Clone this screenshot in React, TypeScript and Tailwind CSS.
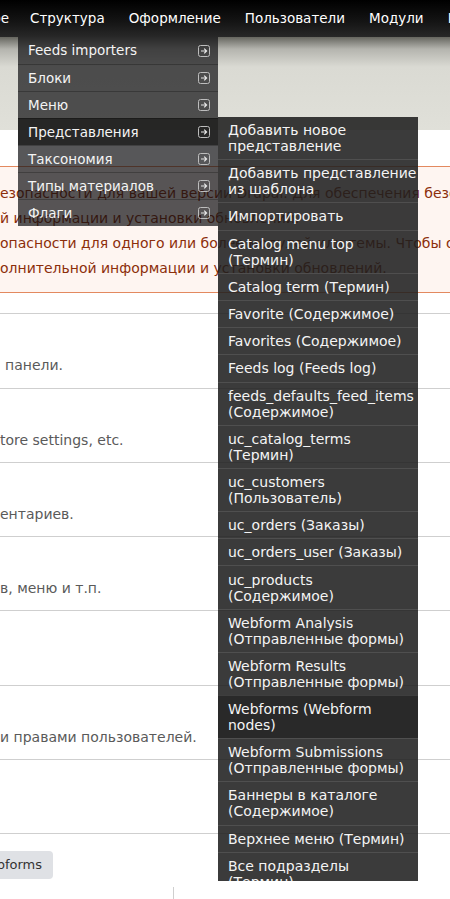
import React from 'react';

const topLinks = ['Структура', 'Оформление', 'Пользователи', 'Модули', 'Конфигурация'];

const structureMenu = [
  { label: 'Feeds importers' },
  { label: 'Блоки' },
  { label: 'Меню' },
  { label: 'Представления', active: true },
  { label: 'Таксономия' },
  { label: 'Типы материалов' },
  { label: 'Флаги' },
];

const viewsMenu = [
  { lines: ['Добавить новое', 'представление'] },
  { lines: ['Добавить представление', 'из шаблона'] },
  { lines: ['Импортировать'] },
  { lines: ['Catalog menu top', '(Термин)'] },
  { lines: ['Catalog term (Термин)'] },
  { lines: ['Favorite (Содержимое)'] },
  { lines: ['Favorites (Содержимое)'] },
  { lines: ['Feeds log (Feeds log)'] },
  { lines: ['feeds_defaults_feed_items', '(Содержимое)'] },
  { lines: ['uc_catalog_terms', '(Термин)'] },
  { lines: ['uc_customers', '(Пользователь)'] },
  { lines: ['uc_orders (Заказы)'] },
  { lines: ['uc_orders_user (Заказы)'] },
  { lines: ['uc_products', '(Содержимое)'] },
  { lines: ['Webform Analysis', '(Отправленные формы)'] },
  { lines: ['Webform Results', '(Отправленные формы)'] },
  { lines: ['Webforms (Webform', 'nodes)'], active: true },
  { lines: ['Webform Submissions', '(Отправленные формы)'] },
  { lines: ['Баннеры в каталоге', '(Содержимое)'] },
  { lines: ['Верхнее меню (Термин)'] },
  { lines: ['Все подразделы', '(Термин)'] },
];

const messageLines = [
  'езопасности для вашей версии Drupal. Для обеспечения безопасности вашего сервера',
  'й информации и установки обновлений.',
  'опасности для одного или более модулей или темы. Чтобы обеспечить безопасность',
  'олнительной информации и установки обновлений.',
];

const sections = [
  { h: 'h-[75px]', text: 'панели.', pad: 'pl-[5px]' },
  { h: 'h-[74px]', text: 'tore settings, etc.', pad: 'pl-0' },
  { h: 'h-[74px]', text: 'ентариев.', pad: 'pl-0' },
  { h: 'h-[74px]', text: 'в, меню и т.п.', pad: 'pl-0' },
  { h: 'h-[75px]', text: '', pad: 'pl-0' },
  { h: 'h-[74px]', text: 'и правами пользователей.', pad: 'pl-0' },
  { h: 'h-[74px]', text: '', pad: 'pl-0' },
];

const ExpandIcon = () => (
  <svg width="12" height="12" viewBox="0 0 12 12" fill="none">
    <rect x="0.5" y="0.5" width="11" height="11" rx="2" stroke="#bdbdbd" />
    <path d="M3 6h5.5M6.2 3.6 8.6 6 6.2 8.4" stroke="#e6e6e6" strokeWidth="1.2" />
  </svg>
);

const App = () => {
  return (
    <div className="relative w-[450px] h-[899px] overflow-hidden bg-white font-['DejaVu_Sans',Verdana,sans-serif]">
      {/* Toolbar */}
      <div className="h-[37px] flex items-center whitespace-nowrap text-[13.5px] text-white bg-[linear-gradient(to_bottom,#000000,#151515_60%,#282828)]">
        <div className="w-[120px] -ml-[111px] text-right shrink-0">Содержимое</div>
        {topLinks.map((link) => (
          <div key={link} className="pl-[21px] pr-[3px] shrink-0">
            {link}
          </div>
        ))}
      </div>

      {/* Shaded band under toolbar */}
      <div className="h-[93px] bg-[linear-gradient(to_bottom,#66665f_0px,#b4b4ae_12px,#dadad3_30px,#e0e0d9_100%)]" />

      {/* Page content */}
      <div className="pt-[36px]">
        <div className="-mx-[10px] border-y border-[#e3895f] bg-[#fef5f1] pt-[14px] pb-[11px] pl-[10px] text-[14px] leading-[25px] text-[#8c2e0b] whitespace-nowrap overflow-hidden">
          {messageLines.map((line, i) => (
            <div key={i}>{line}</div>
          ))}
        </div>

        <div className="mt-[20px] border-t border-[#cfcfcf]">
          {sections.map((s, i) => (
            <div key={i} className={`${s.h} border-b border-[#cfcfcf] pt-[41px] ${s.pad} text-[14px] leading-[20px] text-[#5a5a5a] whitespace-nowrap`}>
              {s.text}
            </div>
          ))}
        </div>

        <div className="mt-[17px] h-[28px] w-[53px] rounded-r-[4px] bg-[#dfe1e5] flex justify-end pr-[11px] text-[13px] leading-[28px] text-[#333] whitespace-nowrap overflow-hidden">
          <span className="shrink-0">Webforms</span>
        </div>
        <div className="ml-[173px] mt-[8px] w-px h-[14px] bg-[#cfcfcf]" />
      </div>

      {/* Structure dropdown */}
      <div className="absolute left-[18px] top-[37px] w-[200px] text-[13.5px] text-[#f4f4f4]">
        {structureMenu.map((item, i) => (
          <div
            key={item.label}
            className={`h-[27px] flex items-center justify-between pl-[10px] pr-[8px] ${i > 0 ? 'border-t border-black/25' : ''} ${item.active ? 'bg-[rgba(22,22,22,0.92)]' : 'bg-[rgba(16,16,18,0.7)]'}`}
          >
            <span className="whitespace-nowrap">{item.label}</span>
            <ExpandIcon />
          </div>
        ))}
      </div>

      {/* Views submenu */}
      <div className="absolute left-[218px] top-[117px] w-[200px] h-[764px] overflow-hidden bg-[rgba(30,30,30,0.87)] text-[14px] leading-[16px] text-[#f4f4f4]">
        {viewsMenu.map((item, i) => (
          <div
            key={i}
            className={`pl-[10px] pr-[4px] py-[5.1px] ${i > 0 ? 'border-t border-white/10' : ''} ${item.active ? 'bg-black/30' : ''}`}
          >
            {item.lines.map((line) => (
              <div key={line} className="whitespace-nowrap">
                {line}
              </div>
            ))}
          </div>
        ))}
      </div>
    </div>
  );
};

export default App;
